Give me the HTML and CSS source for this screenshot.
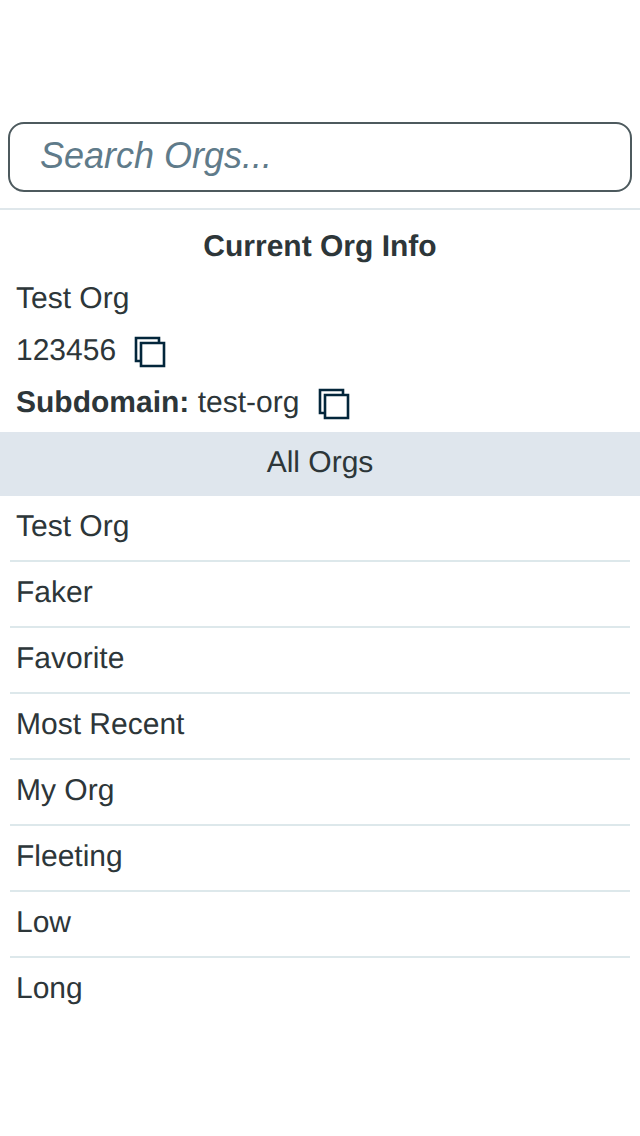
FILE: index.html
```html
<!DOCTYPE html>
<html lang="en">
<head>
<meta charset="utf-8">
<title>Orgs</title>
<link rel="stylesheet" href="styles.css">
</head>
<body>
<main class="panel">
  <div class="search"><input class="search-input" type="text" placeholder="Search Orgs..." aria-label="Search Orgs"></div>
  <section class="current">
    <h1 class="current-title">Current Org Info</h1>
    <div class="info-row">Test Org</div>
    <div class="info-row"><span>123456</span><svg class="copy" viewBox="0 0 32 32"><path d="M7 25H2V2H25V7M7 7H30V30H7Z"/></svg></div>
    <div class="info-row"><span><b>Subdomain:</b> test-org</span><svg class="copy" viewBox="0 0 32 32"><path d="M7 25H2V2H25V7M7 7H30V30H7Z"/></svg></div>
  </section>
  <h2 class="all-title">All Orgs</h2>
  <ul class="orgs">
    <li class="org">Test Org</li>
    <li class="org">Faker</li>
    <li class="org">Favorite</li>
    <li class="org">Most Recent</li>
    <li class="org">My Org</li>
    <li class="org">Fleeting</li>
    <li class="org">Low</li>
    <li class="org">Long</li>
  </ul>
</main>
</body>
</html>
```
FILE: styles.css
```css
* { box-sizing: border-box; }
body { margin: 0; background: #fff; color: #2d3639; font: 30px/36px "Liberation Sans", Arial, sans-serif; text-rendering: geometricPrecision; }
.panel { padding-top: 122px; }
.search { padding: 0 8px 16px; border-bottom: 2px solid #dfe7eb; }
.search-input { display: block; width: 100%; height: 70px; padding: 0 30px 2px; border: 2px solid #4d5a5e; border-radius: 16px; background: #fff; font: italic 36px "Liberation Sans", Arial, sans-serif; color: #2d3639; }
.search-input::placeholder { color: #5f7b8a; opacity: 1; }
.current { height: 222px; padding: 11px 16px 0; }
.current-title { margin: 0; height: 52px; font-size: 30px; line-height: 52px; text-align: center; }
.info-row { display: flex; height: 52px; line-height: 52px; gap: 18.2px; }
.copy { width: 32px; height: 32px; margin-top: 11px; fill: none; stroke: #03263b; stroke-width: 2.6; }
.all-title { margin: 0; height: 64px; background: #dfe6ed; font-size: 30px; font-weight: 400; line-height: 62px; text-align: center; }
.orgs { margin: 0; padding: 0 10px; list-style: none; }
.org { height: 66px; padding: 0 6px; border-bottom: 2px solid #dde8eb; line-height: 62px; }
.org:last-child { border-bottom: 0; }
```
